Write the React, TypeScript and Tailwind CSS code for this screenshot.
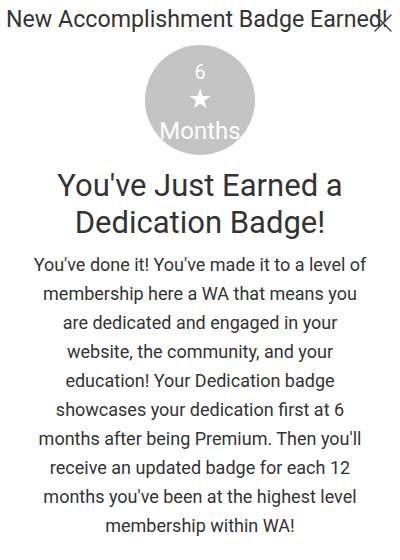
import { X } from "lucide-react";

const BODY =
  "You've done it! You've made it to a level of membership here a WA that means you are dedicated and engaged in your website, the community, and your education! Your Dedication badge showcases your dedication first at 6 months after being Premium. Then you'll receive an updated badge for each 12 months you've been at the highest level membership within WA!";

export default function App() {
  return (
    <div className="w-[400px] h-[560px] overflow-hidden bg-white text-[#333] font-['Roboto',sans-serif]">
      <div className="relative h-[40px] pl-[6px] pt-[4px]">
        <h1 className="text-[23.2px] leading-[30px] whitespace-nowrap">New Accomplishment Badge Earned!</h1>
        <button type="button" aria-label="Close" className="absolute right-[1px] top-[7px] text-[#444]">
          <X size={32} strokeWidth={1.1} />
        </button>
      </div>

      <div className="flex justify-center pt-[5px]">
        <div className="w-[110px] h-[110px] rounded-full bg-[#c4c4c4] flex flex-col items-center text-white">
          <span className="text-[20px] leading-[24px] mt-[15px]">6</span>
          <span className="text-[27px] leading-[26px] mt-[2px]">★</span>
          <span className="text-[24px] leading-[26px] mt-[6px] whitespace-nowrap">Months</span>
        </div>
      </div>

      <h2 className="mt-[12px] text-center text-[31px] leading-[37px] px-4">
        You've Just Earned a Dedication Badge!
      </h2>

      <p className="mt-[9px] mx-auto w-[338px] text-center text-[18px] leading-[29px]">{BODY}</p>
    </div>
  );
}
